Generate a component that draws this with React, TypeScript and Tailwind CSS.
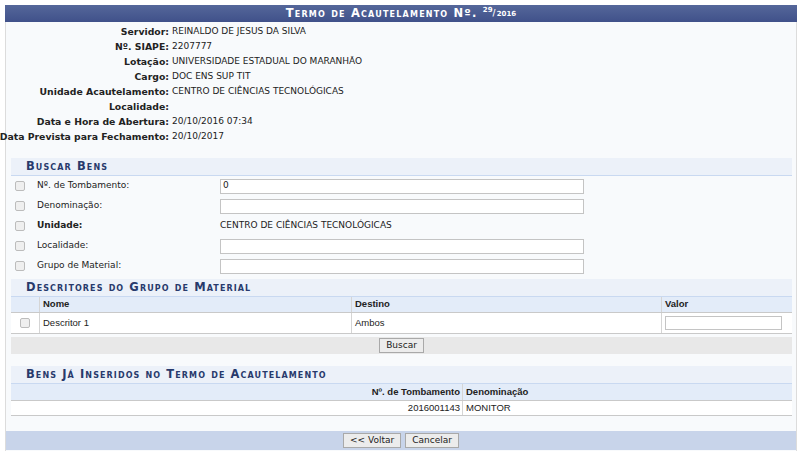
import React from "react";

const info: [string, string][] = [
  ["Servidor:", "REINALDO DE JESUS DA SILVA"],
  ["Nº. SIAPE:", "2207777"],
  ["Lotação:", "UNIVERSIDADE ESTADUAL DO MARANHÃO"],
  ["Cargo:", "DOC ENS SUP TIT"],
  ["Unidade Acautelamento:", "CENTRO DE CIÊNCIAS TECNOLÓGICAS"],
  ["Localidade:", ""],
  ["Data e Hora de Abertura:", "20/10/2016 07:34"],
  ["Data Prevista para Fechamento:", "20/10/2017"],
];

function Check() {
  return <span className="block w-[10px] h-[10px] rounded-[2px] border border-[#bcbcbc] bg-[#efefef]" />;
}

function SubHeader({ children }: { children: React.ReactNode }) {
  return (
    <div className="h-[18px] flex items-center pl-[15px] bg-[#ecf1f9] border-b border-[#c9d9f1] text-[#283a6c] font-bold tracking-[1.1px] [font-variant:small-caps] text-[11.5px]">
      {children}
    </div>
  );
}

function Field({ label, bold, children }: { label: string; bold?: boolean; children: React.ReactNode }) {
  return (
    <div className="h-[20px] flex items-center">
      <div className="w-[26px] flex justify-start pl-[4px]">
        <Check />
      </div>
      <div className={`w-[183px] ${bold ? "font-bold" : ""}`}>{label}</div>
      <div className="flex-1">{children}</div>
    </div>
  );
}

function TextInput({ value = "" }: { value?: string }) {
  return (
    <div className="w-[364px] h-[15px] border border-[#c4c4c4] bg-white flex items-center px-[2px]">{value}</div>
  );
}

function Btn({ children }: { children: React.ReactNode }) {
  return (
    <button className="h-[15px] px-[6px] border border-[#a9a9a9] bg-[#ececec] text-[9px] leading-none text-[#222] font-['DejaVu_Sans',sans-serif]">
      {children}
    </button>
  );
}

export default function App() {
  return (
    <div className="w-[800px] h-[455px] bg-white text-[#222] font-['DejaVu_Sans',sans-serif] text-[9px] overflow-hidden">
      <div className="ml-[5px] w-[792px] pt-[5px]">
        {/* Title bar */}
        <div className="h-[17px] flex items-center justify-center bg-gradient-to-b from-[#55679a] to-[#40518a] text-white font-bold tracking-[1.2px] [font-variant:small-caps] text-[11.5px]">
          Termo de Acautelamento Nº.&nbsp;
          <span className="text-[7px] relative -top-[3px] tracking-normal">29</span>
          <span className="text-[8px]">/</span>
          <span className="text-[7px] relative top-[1px] tracking-normal">2016</span>
        </div>

        <div className="border-x border-[#dcdcdc] bg-[#f8fafc] pb-[1px]">
          {/* Info */}
          <div className="pt-[2px] pb-[14px]">
            {info.map(([k, v]) => (
              <div key={k} className="h-[15px] flex items-center">
                <div className="w-[163px] flex justify-end font-bold whitespace-nowrap text-[9.3px]">{k}</div>
                <div className="pl-[3px] whitespace-nowrap">{v}</div>
              </div>
            ))}
          </div>

          {/* Buscar Bens */}
          <div className="ml-[5px] mr-[4px]">
            <SubHeader>Buscar Bens</SubHeader>
            <Field label="Nº. de Tombamento:">
              <TextInput value="0" />
            </Field>
            <Field label="Denominação:">
              <TextInput />
            </Field>
            <Field label="Unidade:" bold>
              CENTRO DE CIÊNCIAS TECNOLÓGICAS
            </Field>
            <Field label="Localidade:">
              <TextInput />
            </Field>
            <Field label="Grupo de Material:">
              <TextInput />
            </Field>

            <div className="mt-[3px]">
              <SubHeader>Descritores do Grupo de Material</SubHeader>
              <div className="font-['Liberation_Sans',Arial,sans-serif] text-[9.5px]">
                <div className="h-[16px] flex bg-[#e3ecf9] border-b border-[#c9c9c9] font-bold text-[#222]">
                  <div className="w-[28px]" />
                  <div className="w-[312px] border-l border-[#d5d5d5] pl-[3px] flex items-center">Nome</div>
                  <div className="w-[310px] border-l border-[#d5d5d5] pl-[3px] flex items-center">Destino</div>
                  <div className="flex-1 border-l border-[#d5d5d5] pl-[3px] flex items-center">Valor</div>
                </div>
                <div className="h-[21px] flex bg-white border-b border-[#c9c9c9]">
                  <div className="w-[28px] flex items-center justify-center">
                    <Check />
                  </div>
                  <div className="w-[312px] border-l border-[#d5d5d5] pl-[3px] flex items-center">Descritor 1</div>
                  <div className="w-[310px] border-l border-[#d5d5d5] pl-[3px] flex items-center">Ambos</div>
                  <div className="flex-1 border-l border-[#d5d5d5] pl-[3px] flex items-center">
                    <div className="w-[117px] h-[14px] border border-[#c4c4c4] bg-white" />
                  </div>
                </div>
              </div>
              <div className="mt-[3px] h-[17px] bg-[#e8e8e8] flex items-center justify-center">
                <Btn>Buscar</Btn>
              </div>
            </div>

            {/* Bens já inseridos */}
            <div className="mt-[12px]">
              <SubHeader>Bens Já Inseridos no Termo de Acautelamento</SubHeader>
              <div className="font-['Liberation_Sans',Arial,sans-serif] text-[9.5px]">
                <div className="h-[17px] flex bg-[#e3ecf9] border-b border-[#c9c9c9] font-bold">
                  <div className="w-[451px] flex items-center justify-end pr-[2px]">Nº. de Tombamento</div>
                  <div className="flex-1 border-l border-[#d5d5d5] pl-[3px] flex items-center">Denominação</div>
                </div>
                <div className="h-[15px] flex bg-white border-b border-[#c9c9c9]">
                  <div className="w-[451px] flex items-center justify-end pr-[2px]">2016001143</div>
                  <div className="flex-1 border-l border-[#d5d5d5] pl-[3px] flex items-center">MONITOR</div>
                </div>
              </div>
            </div>
          </div>

          <div className="mt-[15px] h-[19px] bg-[#c8d4ea] flex items-center justify-center gap-[4px]">
            <Btn>&lt;&lt; Voltar</Btn>
            <Btn>Cancelar</Btn>
          </div>
        </div>
      </div>
    </div>
  );
}
